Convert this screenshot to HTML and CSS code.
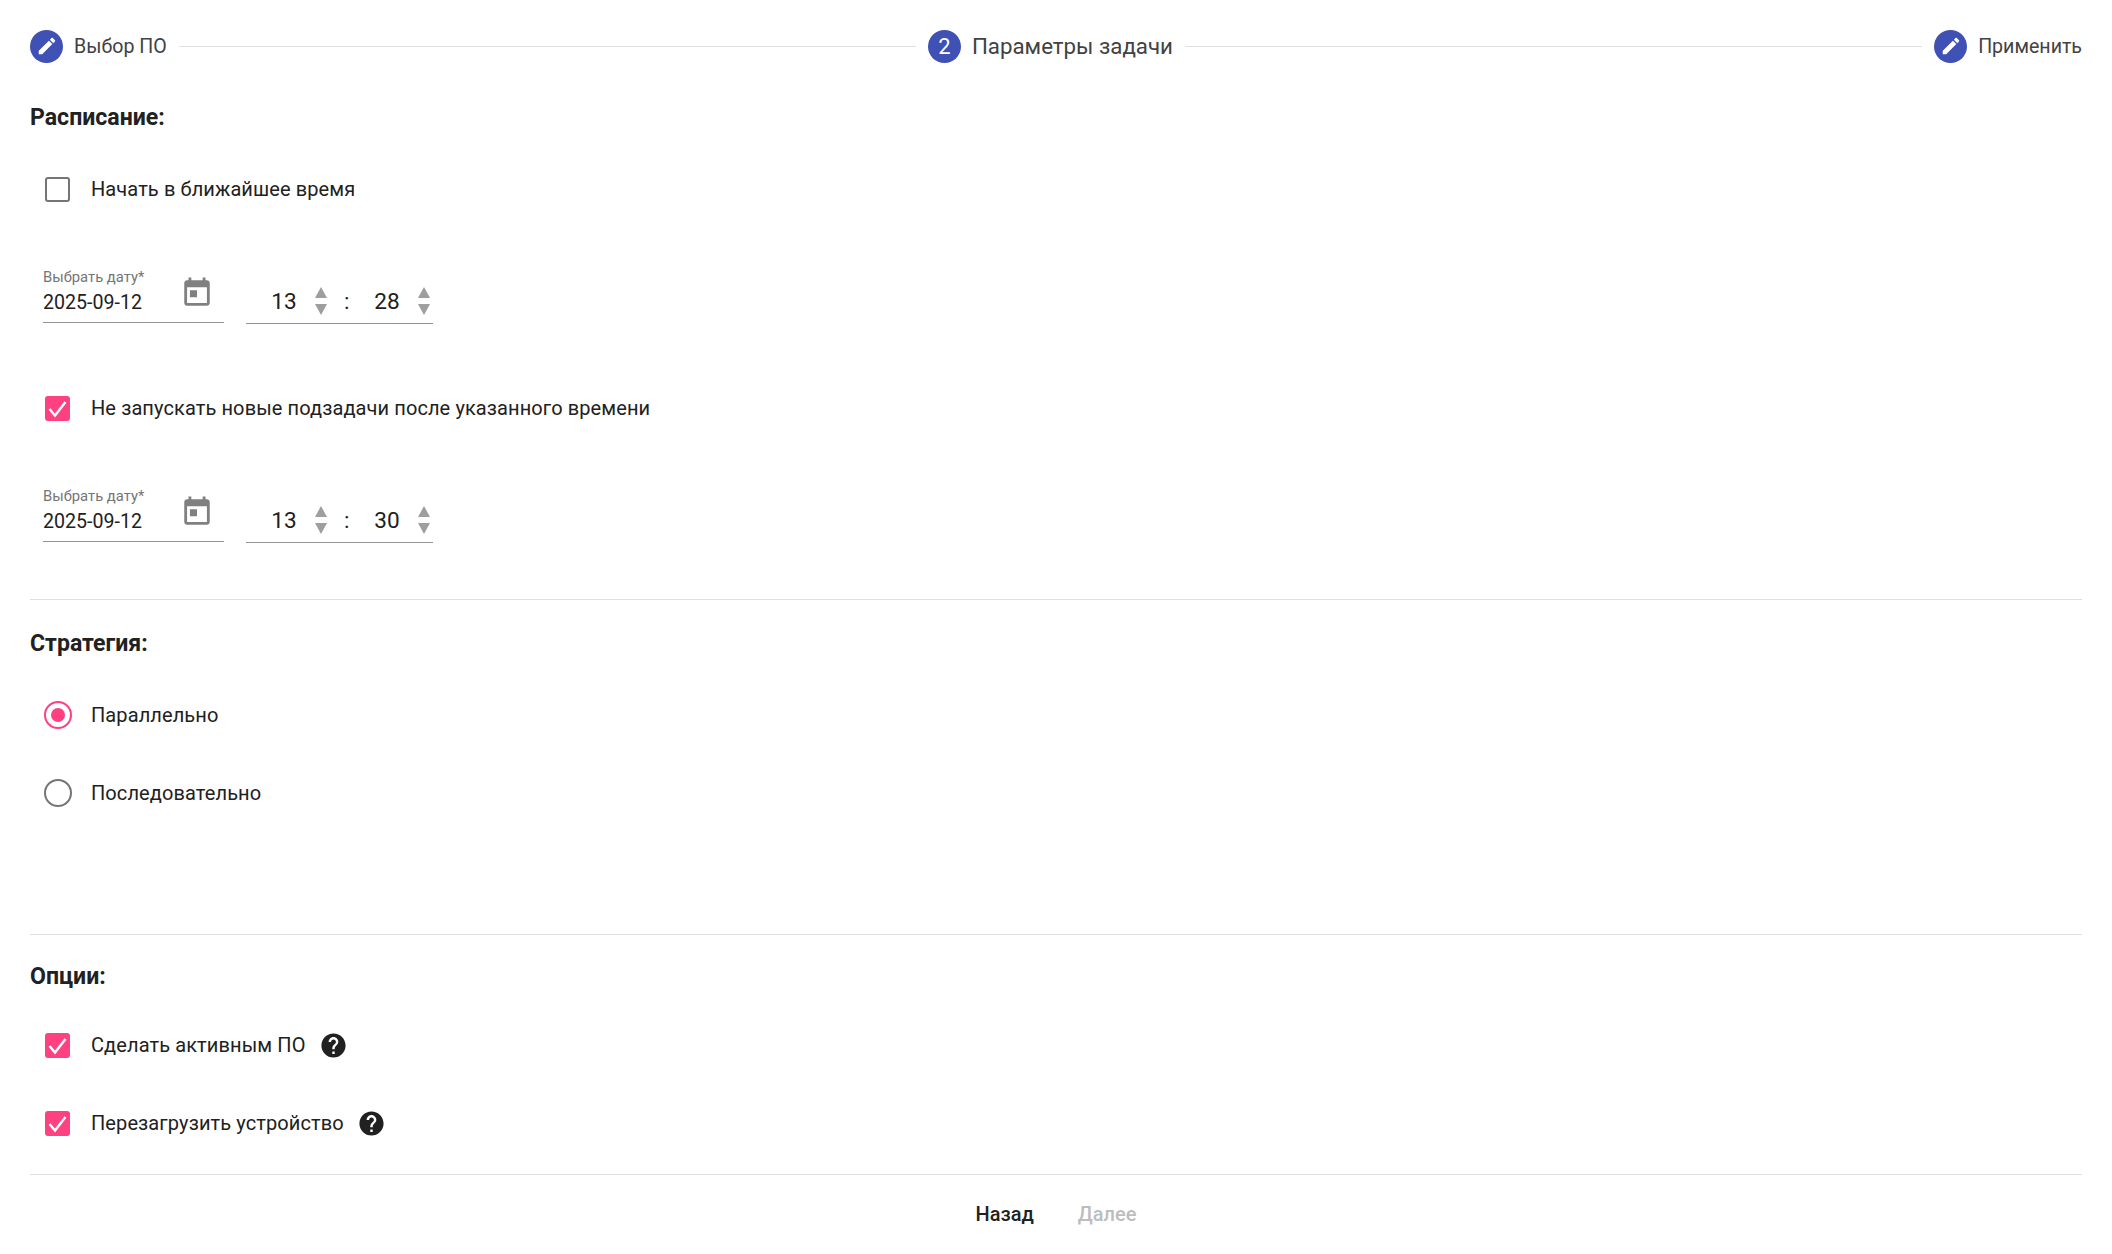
FILE: index.html
```html
<!DOCTYPE html>
<html lang="ru">
<head>
<meta charset="utf-8">
<title>Параметры задачи</title>
<link rel="stylesheet" href="styles.css">
</head>
<body>
<svg class="defs" width="0" height="0" aria-hidden="true">
  <symbol id="i-edit" viewBox="0 0 24 24"><path d="M3 17.25V21h3.75L17.81 9.94l-3.75-3.75L3 17.25zM20.71 7.04c.39-.39.39-1.02 0-1.41l-2.34-2.34c-.39-.39-1.02-.39-1.41 0l-1.83 1.83 3.75 3.75 1.83-1.83z"/></symbol>
  <symbol id="i-today" viewBox="0 0 24 24"><path d="M19 3h-1V1h-2v2H8V1H6v2H5c-1.11 0-1.99.9-1.99 2L3 19c0 1.1.89 2 2 2h14c1.1 0 2-.9 2-2V5c0-1.1-.9-2-2-2zm0 16H5V8h14v11zM7 10h5v5H7z"/></symbol>
  <symbol id="i-help" viewBox="0 0 24 24"><path d="M12 2C6.48 2 2 6.48 2 12s4.48 10 10 10 10-4.48 10-10S17.52 2 12 2zm1 17h-2v-2h2v2zm2.07-7.75l-.9.92C13.45 12.9 13 13.5 13 15h-2v-.5c0-1.1.45-2.1 1.17-2.83l1.24-1.26c.37-.36.59-.86.59-1.41 0-1.1-.9-2-2-2s-2 .9-2 2H8c0-2.21 1.79-4 4-4s4 1.79 4 4c0 .88-.36 1.68-.93 2.25z"/></symbol>
  <symbol id="i-check" viewBox="0 0 25 25"><path d="M4.5 13l5.5 6.5L20.5 6" fill="none" stroke="#fff" stroke-width="2.4"/></symbol>
</svg>
<main class="page">
  <nav class="stepper">
    <div class="step">
      <span class="step-dot"><svg class="step-icon"><use href="#i-edit"/></svg></span>
      <span class="step-label">Выбор ПО</span>
    </div>
    <div class="step-line"></div>
    <div class="step">
      <span class="step-dot step-dot-num">2</span>
      <span class="step-label step-label-active">Параметры задачи</span>
    </div>
    <div class="step-line"></div>
    <div class="step">
      <span class="step-dot"><svg class="step-icon"><use href="#i-edit"/></svg></span>
      <span class="step-label">Применить</span>
    </div>
  </nav>

  <h2 class="heading heading-first">Расписание:</h2>
  <label class="check-row check-row-first">
    <span class="box"></span>
    <span class="label-text">Начать в ближайшее время</span>
  </label>
  <div class="datetime">
    <div class="date-field">
      <div class="date-text">
        <span class="date-caption">Выбрать дату*</span>
        <span class="date-value">2025-09-12</span>
      </div>
      <svg class="cal"><use href="#i-today"/></svg>
    </div>
    <div class="time-field">
      <span class="num num-h">13</span>
      <span class="spin"><i class="up"></i><i class="down"></i></span>
      <span class="colon">:</span>
      <span class="num num-m">28</span>
      <span class="spin"><i class="up"></i><i class="down"></i></span>
    </div>
  </div>
  <label class="check-row check-row-second">
    <span class="box box-on"><svg class="tick"><use href="#i-check"/></svg></span>
    <span class="label-text">Не запускать новые подзадачи после указанного времени</span>
  </label>
  <div class="datetime">
    <div class="date-field">
      <div class="date-text">
        <span class="date-caption">Выбрать дату*</span>
        <span class="date-value">2025-09-12</span>
      </div>
      <svg class="cal"><use href="#i-today"/></svg>
    </div>
    <div class="time-field">
      <span class="num num-h">13</span>
      <span class="spin"><i class="up"></i><i class="down"></i></span>
      <span class="colon">:</span>
      <span class="num num-m">30</span>
      <span class="spin"><i class="up"></i><i class="down"></i></span>
    </div>
  </div>
  <hr class="rule rule-a">

  <h2 class="heading heading-strategy">Стратегия:</h2>
  <div class="radio-group">
    <label class="radio-row">
      <span class="radio radio-on"></span>
      <span class="label-text">Параллельно</span>
    </label>
    <label class="radio-row">
      <span class="radio"></span>
      <span class="label-text">Последовательно</span>
    </label>
  </div>
  <hr class="rule rule-b">

  <h2 class="heading heading-options">Опции:</h2>
  <div class="options">
    <label class="option-row">
      <span class="box box-on"><svg class="tick"><use href="#i-check"/></svg></span>
      <span class="label-text">Сделать активным ПО</span>
      <svg class="help"><use href="#i-help"/></svg>
    </label>
    <label class="option-row">
      <span class="box box-on"><svg class="tick"><use href="#i-check"/></svg></span>
      <span class="label-text">Перезагрузить устройство</span>
      <svg class="help"><use href="#i-help"/></svg>
    </label>
  </div>
  <hr class="rule rule-c">

  <footer class="actions">
    <button class="btn" type="button">Назад</button>
    <button class="btn btn-off" type="button" disabled>Далее</button>
  </footer>
</main>
</body>
</html>
```

FILE: styles.css
```css
* { box-sizing: border-box; }
html, body { margin: 0; padding: 0; background: #fff; }
body {
  font-family: Roboto, "Liberation Sans", sans-serif;
  color: #212121;
  height: 1254px;
  overflow: hidden;
}
.defs { position: absolute; }
.page { padding: 0 30px; }

.stepper { display: flex; align-items: center; height: 92px; }
.step { display: flex; align-items: center; gap: 11px; flex: none; }
.step-dot {
  width: 33px; height: 33px; border-radius: 50%;
  background: #3f51b5; color: #fff;
  display: flex; align-items: center; justify-content: center;
}
.step-dot-num { font-size: 22px; }
.step-icon { width: 22px; height: 22px; fill: #fff; }
.step-label { font-size: 19.6px; color: #424242; }
.step-label-active { font-size: 22.3px; }
.step-line { flex: 1; height: 1px; background: #e0e0e0; margin: 0 12px; }

.heading { margin: 0; font-size: 23.1px; line-height: 24px; font-weight: 700; color: #212121; }
.heading-first { margin-top: 14px; }
.heading-strategy { margin-top: 32px; }
.heading-options { margin-top: 30px; }

.box {
  width: 25px; height: 25px; border: 2px solid #757575; border-radius: 3px;
  flex: none; display: block;
}
.box-on { background: #ff4081; border: 0; }
.tick { width: 25px; height: 25px; display: block; }
.label-text { font-size: 20px; color: #212121; letter-spacing: .1px; }

.check-row { display: flex; align-items: center; gap: 21px; height: 44px; padding-left: 15px; }
.check-row-first { margin-top: 37px; }
.check-row-second { margin-top: 62px; }

.datetime { display: flex; align-items: flex-end; height: 70px; margin-top: 43px; padding-left: 13px; }
.date-field {
  width: 181px; height: 56px; margin-bottom: 1px;
  border-bottom: 1px solid #949494;
  display: flex; justify-content: space-between;
}
.date-text { display: flex; flex-direction: column; padding-top: 2px; }
.date-caption { font-size: 14.8px; line-height: 16px; color: #757575; }
.date-value { font-size: 19.6px; line-height: 24px; margin-top: 6px; color: #212121; }
.cal { width: 34px; height: 34px; fill: #808080; margin: 9px 10px 0 0; }

.time-field {
  width: 187px; height: 40px; margin-left: 22px; padding-bottom: 5px;
  border-bottom: 1px solid #949494;
  display: flex; align-items: center; font-size: 22.6px; color: #212121;
}
.num { width: 28px; text-align: center; }
.num-h { margin-left: 24px; }
.num-m { margin-left: 23px; }
.colon { margin-left: 17px; width: 6px; }
.spin { display: flex; flex-direction: column; gap: 6px; margin-left: 17px; }
.spin i { display: block; width: 0; height: 0; border-left: 6px solid transparent; border-right: 6px solid transparent; }
.spin .up { border-bottom: 11px solid #9e9e9e; }
.spin .down { border-top: 11px solid #9e9e9e; }

.rule { border: 0; height: 1px; margin: 0; background: #e0e0e0; }
.rule-a { margin-top: 56px; }
.rule-b { margin-top: 102px; }
.rule-c { margin-top: 12px; }

.radio-group { margin-top: 20px; }
.radio-row { display: flex; align-items: center; gap: 19px; height: 78px; padding-left: 14px; }
.radio {
  width: 28px; height: 28px; border-radius: 50%; border: 2px solid #757575;
  flex: none; display: flex; align-items: center; justify-content: center;
}
.radio-on { border-color: #ff4081; }
.radio-on::after { content: ""; width: 14px; height: 14px; border-radius: 50%; background: #ff4081; }

.options { margin-top: 17px; }
.option-row { display: flex; align-items: center; height: 78px; padding-left: 15px; gap: 21px; }
.help { width: 29px; height: 29px; fill: #212121; margin-left: -8px; }

.actions { display: flex; justify-content: center; gap: 44px; margin-top: 27px; }
.btn {
  border: 0; background: none; padding: 0; margin: 0;
  font: 500 20px/24px Roboto, sans-serif; color: #212121;
}
.btn-off { color: #bdbdbd; }
```
